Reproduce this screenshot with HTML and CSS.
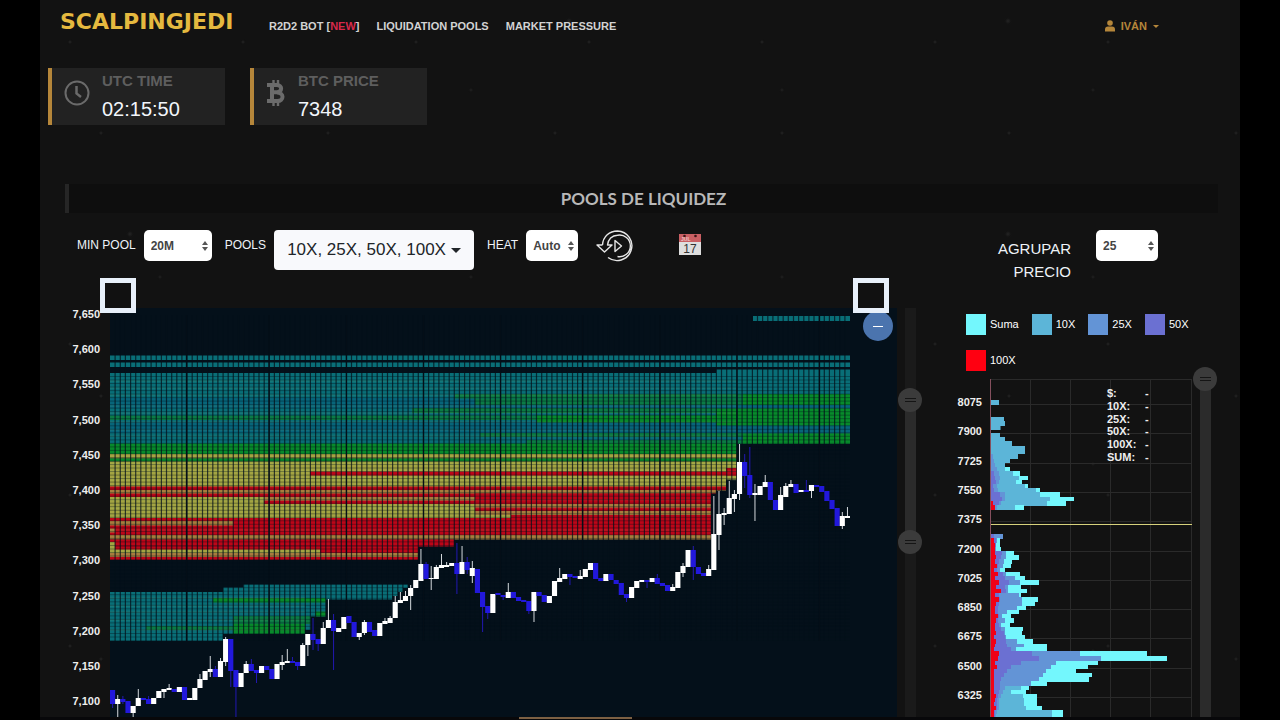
FILE: index.html
```html
<!DOCTYPE html>
<html lang="es">
<head>
<meta charset="utf-8">
<meta name="viewport" content="width=device-width, initial-scale=1">
<title>ScalpingJedi</title>
<link rel="stylesheet" href="styles.css">
</head>
<body>
<div class="page">
  <header class="topbar">
    <a class="logo" href="#">SCALPINGJEDI</a>
    <nav class="nav">
      <a href="#">R2D2 BOT [<span class="new">NEW</span>]</a>
      <a href="#">LIQUIDATION POOLS</a>
      <a href="#">MARKET PRESSURE</a>
    </nav>
    <button class="user" type="button">
      <svg width="10" height="12" viewBox="0 0 10 12" fill="currentColor" aria-hidden="true"><circle cx="5" cy="3" r="2.8"/><path d="M0 11.5V9.5Q0 6.5 3 6.5H7Q10 6.5 10 9.5V11.5Z"/></svg>
      IVÁN
      <span class="caret"></span>
    </button>
  </header>

  <section class="stats">
    <div class="stat">
      <svg class="stat-icon" width="26" height="26" viewBox="0 0 26 26" fill="none" stroke="currentColor" stroke-width="2" aria-hidden="true"><circle cx="13" cy="13" r="11.5"/><path d="M12.500 6V13.500L17 17" stroke-width="2.5"/></svg>
      <div><div class="stat-label">UTC TIME</div><div class="stat-value">02:15:50</div></div>
    </div>
    <div class="stat">
      <svg class="stat-icon" width="20" height="26" viewBox="0 0 20 26" fill="none" stroke="currentColor" aria-hidden="true"><path d="M1 5H11C16.500 5 16.500 12 11 12.300H6M11 12.500C18.500 12.700 18 21 11.500 21H1M6 5V21" stroke-width="4"/><path d="M7.500 0V4M12 0V4M7.500 22V26M12 22V26" stroke-width="2.400"/></svg>
      <div><div class="stat-label">BTC PRICE</div><div class="stat-value">7348</div></div>
    </div>
  </section>

  <h1 class="section-title">POOLS DE LIQUIDEZ</h1>

  <main class="dash">
    <section class="panel">
      <div class="controls">
        <label for="min">MIN POOL</label>
        <select id="min" class="sel sel-min"><option>20M</option></select>
        <label for="pools">POOLS</label>
        <button id="pools" class="pools" type="button">10X, 25X, 50X, 100X <span class="caret caret-dark"></span></button>
        <label for="heat">HEAT</label>
        <select id="heat" class="sel sel-heat"><option>Auto</option></select>
        <button class="icon-btn replay" type="button" aria-label="Replay">
          <svg width="38" height="32" viewBox="0 0 38 32" fill="none" stroke="#e6e6e6" stroke-width="1.4" stroke-linejoin="round"><path d="M6.500 15C7 6.500 13.500 1 21.500 1A14.800 14.800 0 1 1 12 27.500M6.500 15H1L8.500 22L16 15H11.500C12 9.500 16 5.300 21.500 5.300A10.800 10.800 0 1 1 21.500 26.500"/><path d="M19 10.500V21.500L25.500 16Z"/></svg>
        </button>
        <button class="icon-btn" type="button" aria-label="Calendar">
          <svg width="22" height="23" viewBox="0 0 22 23"><rect y="1" width="22" height="21" fill="#dedede"/><rect y="1" width="22" height="8" fill="#c95f63"/><circle cx="5.5" cy="3" r="1.3" fill="#3a1517"/><circle cx="16.5" cy="3" r="1.3" fill="#3a1517"/><text x="2" y="8" class="cal-month">JUL</text><text x="11" y="20" class="cal-day">17</text></svg>
        </button>
      </div>
      <div class="corners">
        <input type="checkbox" class="corner" aria-label="Range start">
        <input type="checkbox" class="corner" aria-label="Range end">
      </div>
      <div class="chart-row">
        <div class="chart-wrap">
          <svg id="heatmap" class="chart" viewBox="60 308 838 409" role="img" aria-label="Liquidity heat map"></svg>
          <button class="zoom-out" type="button" aria-label="Zoom out"></button>
        </div>
        <div class="vslider vslider-range">
          <input type="range" min="0" max="1000" value="208" aria-label="Upper price">
          <input type="range" min="0" max="1000" value="577" aria-label="Lower price">
        </div>
      </div>
    </section>

    <section class="panel">
      <div class="group">
        <label for="grp">AGRUPAR PRECIO</label>
        <select id="grp" class="sel sel-group"><option>25</option></select>
      </div>
      <ul class="legend">
        <li><span class="sw sw-sum"></span>Suma</li>
        <li><span class="sw sw-10"></span>10X</li>
        <li><span class="sw sw-25"></span>25X</li>
        <li><span class="sw sw-50"></span>50X</li>
        <li><span class="sw sw-100"></span>100X</li>
      </ul>
      <div class="chart-row">
        <div class="chart-wrap"><svg id="profile" class="chart" viewBox="946 371 247 346" role="img" aria-label="Liquidation profile"></svg></div>
        <div class="vslider vslider-top">
          <input type="range" min="0" max="1000" value="0" aria-label="Profile range">
        </div>
      </div>
    </section>
  </main>
  <footer class="foot"><span class="foot-bar"></span></footer>
</div>
<script src="charts.js"></script>
</body>
</html>
```
FILE: styles.css
```css
* { box-sizing: border-box; }
body {
  margin: 0;
  background: #000;
  color: #eef3f8;
  font-family: "Liberation Sans", Arial, sans-serif;
}
button, select, input { font-family: inherit; margin: 0; }
button { border: 0; padding: 0; background: none; cursor: pointer; }
a { color: inherit; text-decoration: none; }
.page {
  margin: 0 40px;
  min-height: 100vh;
  background-color: #121212;
  background-image:
    radial-gradient(circle at 30px 42px, #262626 0, #121212 2px, transparent 3px),
    radial-gradient(circle at 120px 90px, #222 0, #121212 2px, transparent 3px),
    radial-gradient(circle at 61px 133px, #262626 0, #121212 2px, transparent 3px),
    radial-gradient(circle at 90px 21px, #242424 0, #121212 3px, transparent 4px);
  background-size: 173px 151px, 311px 187px, 227px 263px, 439px 213px;
}
.topbar { display: flex; align-items: flex-start; height: 68px; padding: 0 81px 0 20px; }
.logo {
  display: flex;
  align-items: center;
  width: 209px;
  padding-top: 10px;
  color: #e5b93f;
  font: bold 22px/24px "DejaVu Sans", sans-serif;
}
.nav { display: flex; gap: 17px; padding-top: 19px; font-size: 11px; font-weight: bold; line-height: 14px; color: #d2d2d2; }
.new { color: #d6294b; }
.user { display: flex; align-items: center; gap: 6px; margin-left: auto; margin-top: 19px; font-size: 11px; font-weight: bold; line-height: 14px; color: #b5863a; }
.caret { width: 0; border: 3px solid transparent; border-top-color: currentColor; border-bottom: 0; }
.caret-dark { border-width: 5px 5px 0; }

.stats { display: flex; gap: 25px; padding-left: 8px; }
.stat { display: flex; gap: 12px; width: 177px; height: 57px; padding-left: 12px; border-left: 4px solid #b5863a; background: #222; }
.stat-icon { margin-top: 12px; color: #6b6b6b; }
.stat-label { padding-top: 3px; font-size: 15px; font-weight: bold; line-height: 20px; color: #5e5e5e; }
.stat-value { padding-top: 6px; font-size: 20px; line-height: 24px; color: #f2f6fb; }

.section-title {
  margin: 59px 22px 0 25px;
  border-left: 4px solid #262626;
  background: #0e0e0e;
  text-align: center;
  color: #b8b8b8;
  font: bold 17px/29px Lato, sans-serif;
}
.dash {
  display: grid;
  grid-template-columns: minmax(0, 862fr) minmax(0, 271fr);
  gap: 24px;
  padding: 17px 23px 0 20px;
}
.panel { display: flex; flex-direction: column; min-width: 0; }
.controls { display: flex; align-items: flex-start; gap: 8px; height: 40px; padding-left: 17px; font-size: 12px; line-height: 30px; }
.controls label { white-space: nowrap; }
.sel {
  height: 31px;
  padding: 0 7px;
  border: 0;
  border-radius: 5px;
  appearance: none;
  color: #444;
  font-size: 12px;
  font-weight: bold;
  background: #fff url("data:image/svg+xml,%3Csvg xmlns='http://www.w3.org/2000/svg' width='6' height='12'%3E%3Cpath d='M0 5L3 1L6 5ZM0 7L3 11L6 7Z' fill='%23555'/%3E%3C/svg%3E") no-repeat right 4px center;
}
.sel-min { width: 68px; margin-right: 5px; }
.sel-heat { width: 52px; }
.sel-group { width: 62px; }
.pools {
  display: flex;
  align-items: center;
  justify-content: center;
  gap: 5px;
  width: 200px;
  height: 40px;
  margin-right: 5px;
  border-radius: 4px;
  background: #f8f9fc;
  color: #212529;
  font-size: 17px;
  white-space: nowrap;
}
.icon-btn { display: flex; padding-top: 3px; }
.replay { margin: 0 37px 0 10px; padding-top: 0; }
.cal-month { font: bold 5px "Liberation Sans", sans-serif; fill: #eec6c6; }
.cal-day { font: 12px "Liberation Sans", sans-serif; fill: #333; text-anchor: middle; }

.corners { display: flex; justify-content: space-between; margin: 8px 33px -5px 40px; z-index: 1; }
.corner { appearance: none; width: 36px; height: 35px; border: 5px solid #e8f0fa; background: #111; }
.chart-row { display: flex; }
.chart-wrap { position: relative; flex: 1; min-width: 0; }
.chart { display: block; width: 100%; height: auto; }
.zoom-out {
  position: absolute;
  top: 3px;
  right: 5px;
  width: 30px;
  height: 30px;
  border-radius: 50%;
  background: linear-gradient(#fff, #fff) center / 10px 1px no-repeat #4b74ae;
}
.vslider { position: relative; width: 24px; }
.vslider-range { background: linear-gradient(#1a1a1a 23%, #2b2b2b 23% 57%, #1a1a1a 57%) center / 11px 100% no-repeat; }
.vslider-top { margin-top: -4px; background: linear-gradient(transparent 12px, #2b2b2b 12px) center / 11px 100% no-repeat; }
.vslider input {
  position: absolute;
  inset: 0;
  width: 24px;
  height: 100%;
  appearance: none;
  writing-mode: vertical-lr;
  background: none;
  pointer-events: none;
}
.vslider input::-webkit-slider-thumb {
  appearance: none;
  width: 24px;
  height: 24px;
  border-radius: 50%;
  pointer-events: auto;
  background: linear-gradient(#151515 1px, transparent 1px 3px, #151515 3px) center / 11px 4px no-repeat #3b3b3b;
}

.group { display: flex; gap: 25px; height: 84px; padding-left: 35px; }
.group label { width: 90px; padding-top: 7px; text-align: right; font-size: 15px; line-height: 23px; }
.legend { display: flex; flex-wrap: wrap; gap: 15px 13px; margin: 0 23px 0 20px; padding: 0; list-style: none; font-size: 11px; line-height: 21px; color: #fff; }
.legend li { display: flex; gap: 4px; }
.sw { width: 20px; height: 21px; }
.sw-sum { background: #73f7fd; }
.sw-10 { background: #5cb5d8; }
.sw-25 { background: #6394d6; }
.sw-50 { background: #6b70d2; }
.sw-100 { background: #ff0011; }

.axis { font: bold 11px "Liberation Sans", sans-serif; fill: #eee; text-anchor: end; }
.readout { font: bold 11px "Liberation Sans", sans-serif; fill: #eee; }
.foot { display: flex; justify-content: center; height: 3px; padding-right: 130px; background: #08080a; }
.foot-bar { width: 113px; height: 2px; background: #7d6043; }
```
FILE: charts.js
```js
const NS = "http://www.w3.org/2000/svg";
function add(parent, name, attrs, text) {
  const el = document.createElementNS(NS, name);
  for (const k in attrs) el.setAttribute(k, attrs[k]);
  if (text !== undefined) el.textContent = text;
  parent.appendChild(el);
  return el;
}
function box(svg, x1, y1, x2, y2, fill) {
  add(svg, "rect", { x: x1, y: y1, width: x2 - x1, height: y2 - y1, fill: fill });
}

/* Heat map: bands are [left, top, right, bottom, tone] */
const heat = document.getElementById("heatmap");
const tone = { t: "#096e77", b: "#07657a", g: "#078a2b", d: "#0b7b45", y: "#a3a442", o: "#a77c3d", r: "#bd0518", k: "#04101a" };
const bands = [
  [753,316,850,321,"t"],[110,355.5,850,360,"t"],[110,362.5,850,367,"t"],
  [110,373,850,444,"t"],[716,369.5,850,373,"t"],[110,398,850,408,"b"],[110,422,850,433,"b"],
  [455,394,850,398.5,"d"],[475,398.5,850,405,"d"],[412,408,850,413,"d"],[110,415.5,850,420,"d"],
  [537,415.5,850,422.5,"g"],[480,433,850,437,"d"],[527,440,850,444,"d"],[743,394,850,405,"g"],
  [716,409,850,425.5,"g"],[660,399,743,404,"d"],[743,434,850,444,"g"],
  [110,443.5,737,454,"g"],[110,454,737,458.5,"y"],[110,458.5,737,461.5,"g"],
  [110,461.5,737,518,"y"],[310,471.5,737,475.5,"r"],[726,468,737,475.5,"r"],
  [110,486.5,737,490,"r"],[110,490,737,493.5,"o"],[110,493.5,737,497,"r"],
  [264,497,475,500.5,"o"],[264,500.5,475,504,"r"],[475,493.5,737,504,"r"],
  [475,504,737,507.5,"o"],[475,507.5,737,511,"r"],[475,511,737,515,"o"],
  [511,515,737,518,"r"],[110,518,737,535,"r"],[110,521,233,525.5,"o"],[110,528.5,115,532.5,"o"],
  [110,535,711,539.5,"o"],[110,539.5,454,546.5,"r"],[110,546.5,418,560,"r"],
  [110,542,115,551,"y"],[110,549.5,320,553,"y"],[110,553,418,557,"o"],
  [711,493.5,717,546,"k"],[716,490.5,727,546,"k"],[726,479.5,738,546,"k"],
  [110,592,223,641,"t"],[223,587.5,243,634,"t"],[243,584.5,311,634,"t"],[305,630,311,634,"k"],
  [311,584.5,326,616.5,"t"],[326,584.5,392,599.5,"t"],[392,584.5,398,596,"t"],[398,584.5,403,592,"t"],[403,584.5,408,588,"t"],
  [213,598,326,602.5,"g"],[233,616,311,624,"d"],[315,611.5,326,616.5,"g"],
  [146,626,233,630,"d"],[233,624,305,634,"g"]
];
box(heat, 110, 308, 897, 717, tone.k);
for (const b of bands) box(heat, b[0], b[1], b[2], b[3], tone[b[4]]);

/* Cell grid over the bands */
const STEP = 740 / 144;
let rows = "";
for (let y = 376.5; y < 641; y += 3.52) rows += `M110 ${y.toFixed(1)}H850`;
add(heat, "path", { d: rows, stroke: tone.k, "stroke-opacity": 0.36, "stroke-width": 1 });
let light = "";
for (const y of [381,388,395,406,413,422,430,436,464,471,480,500,508,530]) light += `M110 ${y}H${y > 490 ? 711 : 737}`;
for (const y of [598,606,612,620,630]) light += `M110 ${y}H305`;
add(heat, "path", { d: light, stroke: "#c8ff9a", "stroke-opacity": 0.13, "stroke-width": 1 });
let cols = "";
for (let i = 1; i < 144; i++) cols += `M${(110 + i * STEP).toFixed(1)} 315V641`;
add(heat, "path", { d: cols, stroke: tone.k, "stroke-opacity": 0.75, "stroke-width": 1.2 });
add(heat, "path", { d: [186.5,269,346.5,423.5,500.5,582.5,660,737,819.5].map(x => `M${x} 315V641`).join(""), stroke: "#040e17", "stroke-width": 1.3 });

/* Candles: tone, body top, body bottom, wick top, wick bottom */
const candles = `b690,704,690,708 w699,704,695,717 b699,702,696,704 b701,713 w706,713,706,717 w698,706,689,706 b698,700 b699,704,696,704 w698,704 w691,698 w689,692,689,698 w688,690,684,690
b689,692 w687,692 b687,700 w698,700 w688,700 w679,688,674,688 w671,680 w669,672,656,677 b669,677,666,677 w661,677,658,677 w639,662,637,666 b639,671,639,687 b670,687,670,717 w673,687 w664,673,661,673
b664,671,659,671 b670,673,670,683 w666,673 b666,670 b669,679 w664,679 w662,665,655,670 w661,663,649,663 b661,663,657,663 b662,666,662,670 w645,666,643,666 w634,645,634,656 b634,640,618,650 b639,644,639,651
w628,644,622,644 w620,628,599,628 b620,631,614,670 w628,632 w617,629 b616,623 b622,637 w633,637,633,640 w622,633,620,635 b622,632 b630,636 w623,636 w621,624,618,624 w618,623,616,623 w602,618,596,618
w600,603,592,603 w596,601,591,601 w588,596,585,610 w580,588 w564,581,549,581 b564,579,562,579 w578,579,566,590 w567,579,565,579 w565,568,554,568 w565,567,562,567 w563,566 b563,574,543,594 w562,574,546,574
b562,570,557,574 w568,576,561,583 b569,593 b592,607,592,632 b606,613,606,619 w594,613 b593,595 b595,597,595,600 w592,598,583,598 b592,598 b597,601 b600,602 b601,611,601,614 w592,611,592,622 b592,596 b595,602
w596,603 w581,596 w578,582,568,582 w574,579 b574,577,574,585 b576,578 w576,579,570,579 w569,577 w563,570 b563,579 b578,581 w574,581 b574,580 b580,584 b583,595 b594,598,594,602 w587,598 w581,588 w580,582
b580,582,580,588 w578,582 b578,584,574,584 b583,586 b585,591 w587,591,584,591 w572,588 w566,573,563,577 w550,567 b550,567,546,580 b567,574 b573,576 w569,576,565,576 w534,570,496,570 w514,535,491,550
w513,515,508,525 w498,514,481,514 w494,499,490,512 w462,494,444,500 b462,476,454,488 b475,495,447,498 w493,495,484,521 w486,495 w482,487,475,487 b482,500 b500,510 w495,510,487,510 w486,497,483,497
w484,487,480,487 b484,493 w490,492 b490,492,480,492 w485,491,485,498 b485,487 b486,492 b491,501 b500,509 b508,526 w516,526,512,529 w516,518,507,518`.split(/\s+/);
candles.forEach((c, i) => {
  const v = c.slice(1).split(",").map(Number);
  const fill = c[0] === "w" ? "#fff" : "#2218dc";
  const x = 110 + i * STEP;
  if (v.length > 2) add(heat, "rect", { x: x + 2.1, y: v[2], width: 1, height: v[3] - v[2], fill: c[0] === "w" ? "#d4d8dc" : "#2218b0" });
  box(heat, x, v[0], x + STEP, v[1], fill);
});
for (let k = 0; k < 12; k++) add(heat, "text", { x: 100, y: (318 + k * 35.2).toFixed(0), class: "axis" }, (7650 - 50 * k).toLocaleString("en-US"));

/* Liquidation profile: top, then widths for sum, 10X, 25X, 50X, 100X */
const prof = document.getElementById("profile");
let grid = "";
for (const x of [1031,1071,1111,1151,1192]) grid += `M${x - 0.5} 379V717`;
grid += "M991 379.5H1192";
for (let k = 0; k < 11; k++) grid += `M991 ${Math.round(404 + k * 29.3) + 0.5}H1192`;
add(prof, "path", { d: grid, stroke: "#2a2a2a", "stroke-width": 1 });
const rowsData = [
  [400,0,8],[417,0,13],[421,0,14],[425.5,0,9.5],[433,0,9],[437.2,0,14],[441.4,0,21],[445.6,0,34],[449.8,0,34],[454,0,27,2],[458.5,0,19,3],[463,0,14,4],
  [467,19,14,6],[471,29,22,8,3],[475.5,37,28,9,4],[480,31,25,8,5],[484,37,34,6,2],[488,49,45,7,3],[492.3,69,49,14,9],[496.6,83,59,14,11],[501,75,56,10,8,2],[505.4,33,24,6,4,4],
  [534,0,0,12,3],[538.4,9,0,6,5,3],[542.6,9,0,5,5,4],[546.8,10,0,5,4,4],
  [551,23,0,15,11,4],[555.2,28,0,15,10,5],[559.4,21,0,13,8,4],[563.6,20,0,12,7,6],[567.8,14,0,9,6,3],[572,29,0,15,12,7],[576.2,34,0,24,14,4],[580.4,48,0,29,18,8],[584.6,30,0,17,14,5],[588.8,36,0,17,15,10],[593,30,0,28,8,4],
  [597.2,47,0,31,9,8],[601.5,44,0,31,8,5],[605.8,35,0,26,7,4],[610,28,0,16,7,4],[614.2,20,0,11,8,7],[618.4,23,0,14,7,5],[622.6,19,0,10,8,4],[626.8,32,0,14,10,4],[631,31,0,14,13,5],[635.2,34,0,15,14,3],[639.4,42,0,26,15,5],[643.6,56,0,33,16,4],[647.4,56,0,25,20,3],
  [651.2,156,0,89,41,8],[655.5,176,0,110,48,7],[660.5,107,0,65,30,4],[664.7,97,0,60,20,6],[668.9,85,0,55,16,3],[673,101,0,52,13,3],[677.2,98,0,48,10,3],[681.4,56,0,40,9,3],[685.6,38,30,14,9,3],[689.8,35,20,12,8,3],[694,46,32,10,7,5],[698,46,33,8,6,4],[702,46,33,8,6,3],[706,51,35,8,6,5],[710.2,72,61,6,4,3],[714,72,61,5,4,3]
];
const fills = ["#73f7fd", "#5cb5d8", "#6394d6", "#6b70d2", "#f00016"];
rowsData.forEach((r, i) => {
  const next = rowsData[i + 1];
  const bottom = Math.min(717, next && next[0] - r[0] < 6 ? next[0] + 0.2 : r[0] + 4.5);
  for (let k = 1; k < r.length; k++) if (r[k]) box(prof, 991, Math.round(r[0]), 991 + r[k], Math.round(bottom), fills[k - 1]);
});
box(prof, 990, 379, 991, 717, "#85505e");
box(prof, 991, 524, 1192, 525, "#d6d17c");
for (let k = 0; k < 11; k++) add(prof, "text", { x: 982, y: (406 + k * 29.3).toFixed(0), class: "axis" }, String(8075 - 175 * k));
["$:", "10X:", "25X:", "50X:", "100X:", "SUM:"].forEach((t, k) => {
  const y = (397 + k * 12.8).toFixed(0);
  add(prof, "text", { x: 1107, y: y, class: "readout" }, t);
  add(prof, "text", { x: 1145, y: y, class: "readout" }, "-");
});
```
